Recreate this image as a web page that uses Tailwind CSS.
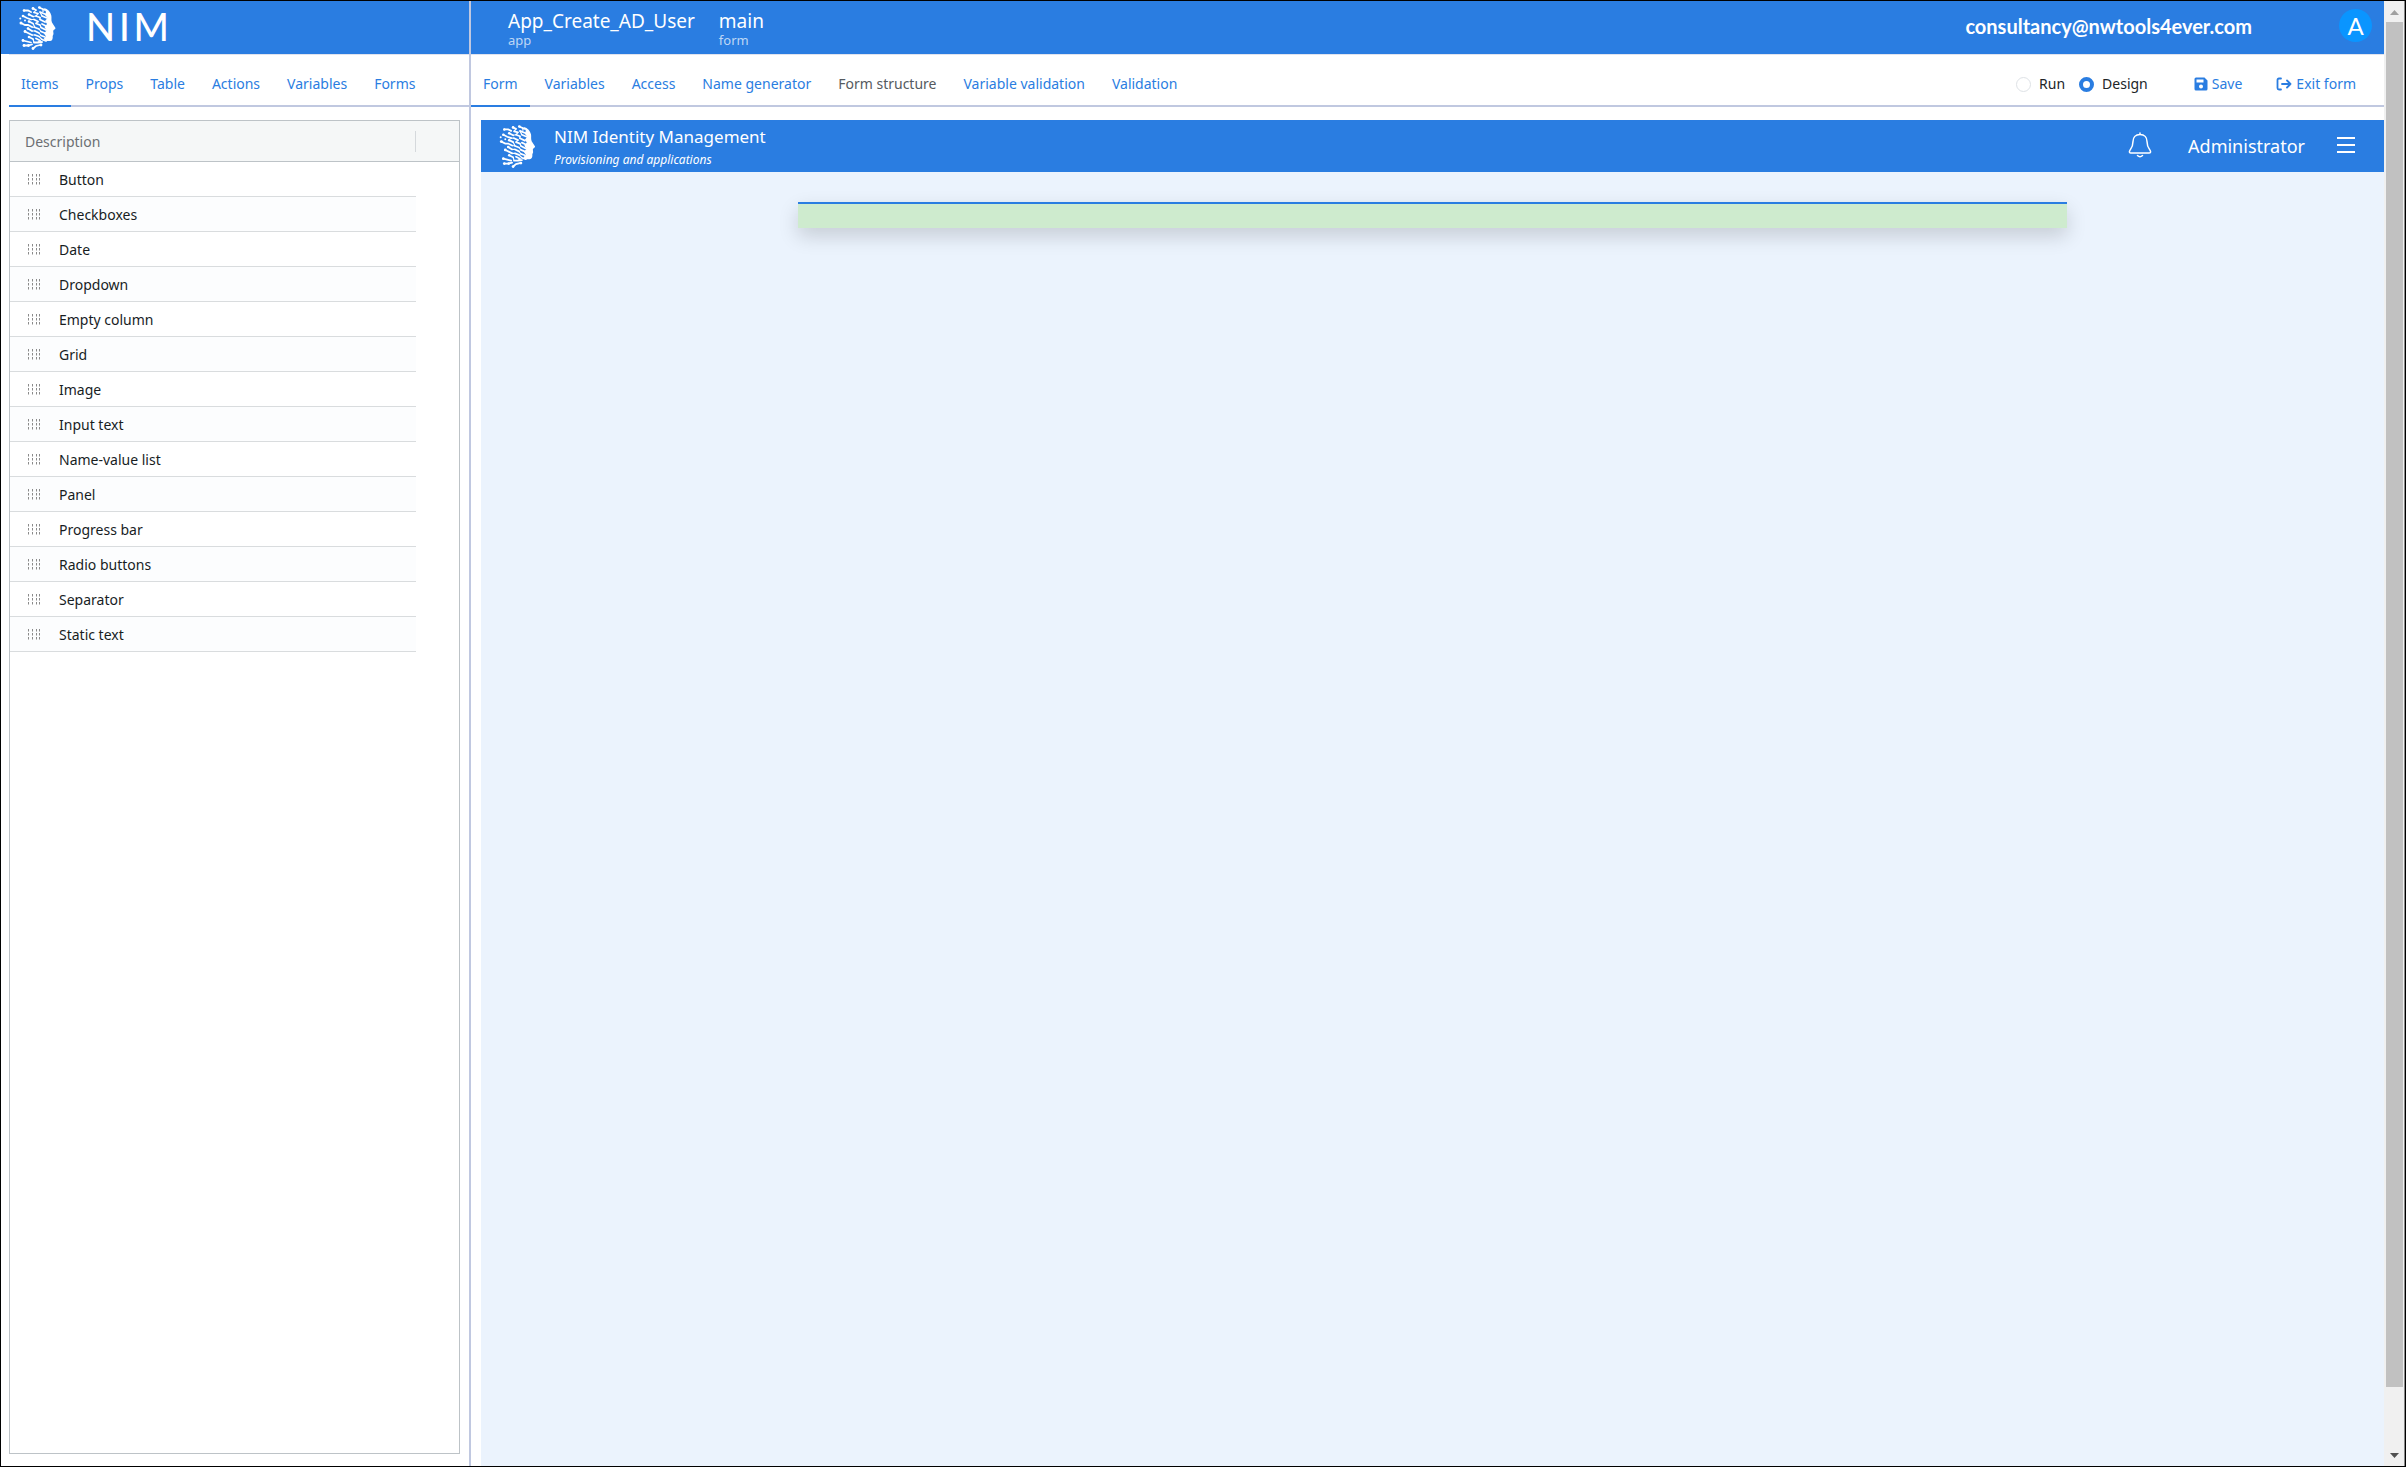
<!DOCTYPE html>
<html lang="en">
<head>
  <meta charset="UTF-8" />
  <meta name="viewport" content="width=device-width, initial-scale=1.0" />
  <title>NIM - App_Create_AD_User</title>
  <script src="https://cdn.jsdelivr.net/npm/@tailwindcss/browser@4"></script>
</head>
<body class="h-screen overflow-hidden bg-black p-px font-['Noto_Sans',sans-serif] text-sm text-[#212529]">
  <!-- shared icons -->
  <svg class="hidden">
    <symbol id="face" viewBox="0 0 37 44">
      <path fill="currentColor" d="M25 2C29 3 31.500 6 32.300 9.500C32.800 12 32 14 33 16.500L36.500 22C36.500 23.500 34.500 23.500 34.200 25L34.500 28L33.700 30C34 33 33 35 31 35H27L24.500 33L27 30.500L25 27.500L27.500 24.500L25.500 21L28 18L26 15L28.500 12L26 9L27 6Z"/>
      <g stroke="currentColor" stroke-width="1.800" stroke-linecap="round" fill="none">
        <path d="M14 2.500L17 4M20 1.500L26 4M5 4.500H9L12 6M15 6.500L19 7.500M21 6L27 8.500"/>
        <path d="M10 8.500L14 10.500M17 10L21 11.500M23 10L28 12M4 10L8 12L12 13.500M15 13.500L19 15.500M21 13.500L26 16"/>
        <path d="M10 15.500L14 17.500M17 17.500L21 19M23 18L27 20M2 17L6 19H9L13 21M16 21.500L20 23M22 21.500L27 24"/>
        <path d="M9 22.500L13 25M16 25L20 27M22 25.500L27 27.500M6 25.500L10 27.500L13 29M16 29L20 30.500M22 29.500L26 31"/>
        <path d="M10 31L14 33M17 32.500L21 34.500M23 33.500L27 35M4 34.500L8 35.500L12 36.500M15 36.500H19L23 36"/>
        <path d="M5 39.500H9L13 38.500M14 42.500L17 40L21 39"/>
      </g>
      <g stroke="currentColor" stroke-width="1.200" fill="none">
        <path d="M17 4L15 6.500M19 7.500L17 10M24 3V6M21 6L23 10M12 13.500L15 13.500M21 11.500V13.500M14 10.500L17 10M19 15.500L17 17.500M14 17.500L16 21.500M21 19L22 21.500M13 21L16 21.500M20 23L22 25.500M13 25L16 25M20 27L22 29.500M13 29L16 29M20 30.500L23 33.500M14 33L15 36.500M21 34.500L19 36.500"/>
      </g>
      <g fill="currentColor">
        <circle cx="14" cy="2.500" r="1.400"/><circle cx="20.500" cy="1.500" r="1.300"/><circle cx="5" cy="4.500" r="1.300"/><circle cx="10" cy="8.500" r="1.300"/>
        <circle cx="4" cy="10" r="1.300"/><circle cx="1.300" cy="12.500" r="1"/><circle cx="6" cy="14.500" r="1"/><circle cx="10" cy="15.500" r="1.300"/>
        <circle cx="2" cy="17" r="1.500"/><circle cx="9" cy="22.500" r="1.300"/><circle cx="6" cy="25.500" r="1.400"/><circle cx="10" cy="31" r="1.300"/>
        <circle cx="4" cy="34.500" r="1.400"/><circle cx="5" cy="39.500" r="1.400"/><circle cx="9.500" cy="39.500" r="1.400"/><circle cx="14" cy="42.500" r="1.400"/><circle cx="22" cy="39" r="1.400"/>
      </g>
    </symbol>
    <symbol id="grip" viewBox="0 0 14 11">
      <path stroke="#8a8a8a" stroke-width="1" fill="none" stroke-dasharray="2.500 1.500" d="M1.500 0V11M5.500 0V11M9.500 0V11M12.500 0V11"/>
    </symbol>
  </svg>

  <div class="flex h-full bg-white">
    <!-- left panel -->
    <aside class="flex w-[470px] shrink-0 flex-col border-r-2 border-[#c0c8e0]">
      <header class="flex h-[53px] shrink-0 items-center bg-[#2a7de1] pl-[18px] text-white">
        <svg class="h-11 w-[37px]"><use href="#face"/></svg>
        <span class="ml-[30px] pb-[3px] font-['Lato',sans-serif] text-[38px] leading-none font-medium tracking-widest">NIM</span>
      </header>
      <nav class="ml-2 flex h-[53px] shrink-0 gap-[3px] border-t border-[#dfe3ee] shadow-[inset_0_-2px_0_#c0c8e0]">
        <a href="#" class="flex items-center border-b-2 border-[#2a7de1] px-3 pt-2 text-[#2a7de1]">Items</a>
        <a href="#" class="flex items-center px-3 pt-[6px] text-[#2a7de1]">Props</a>
        <a href="#" class="flex items-center px-3 pt-[6px] text-[#2a7de1]">Table</a>
        <a href="#" class="flex items-center px-3 pt-[6px] text-[#2a7de1]">Actions</a>
        <a href="#" class="flex items-center px-3 pt-[6px] text-[#2a7de1]">Variables</a>
        <a href="#" class="flex items-center px-3 pt-[6px] text-[#2a7de1]">Forms</a>
      </nav>
      <div class="mt-[13px] mr-[9px] mb-3 ml-2 flex-1 border border-[#bdc3c7]">
        <div class="flex h-[41px] items-center border-b border-[#bdc3c7] bg-[#f5f7f7] pr-[43px]">
          <span id="colDescription" class="flex-1 pt-px pl-[15px] text-[#6c6f73]">Description</span>
          <span class="h-[21px] w-px bg-[#d5d9dc]"></span>
        </div>
        <div class="pr-[43px]">
          <table class="w-full border-separate border-spacing-0" aria-labelledby="colDescription">
            <tbody id="items"></tbody>
          </table>
        </div>
      </div>
    </aside>

    <!-- designer -->
    <main class="flex min-w-0 flex-1 flex-col">
      <header class="flex h-[53px] shrink-0 items-center bg-[#2a7de1] pr-3 pl-[37px] text-white">
        <div class="mr-6">
          <div class="text-[19px] leading-6">App_Create_AD_User</div>
          <div class="text-[13px] leading-[14px] text-white/70">app</div>
        </div>
        <div>
          <div class="text-[19px] leading-6">main</div>
          <div class="text-[13px] leading-[14px] text-white/70">form</div>
        </div>
        <span class="ml-auto pb-1 font-['Lato',sans-serif] text-xl font-bold">consultancy@nwtools4ever.com</span>
        <span class="mb-1 ml-[87px] flex size-[33px] items-center justify-center rounded-full bg-[#0a95ff] font-['Lato',sans-serif] text-2xl">A</span>
      </header>

      <div class="flex h-[53px] shrink-0 items-stretch border-t border-[#dfe3ee] shadow-[inset_0_-2px_0_#c0c8e0]">
        <nav class="flex gap-[3px]">
          <a href="#" class="flex items-center border-b-2 border-[#2a7de1] px-3 pt-2 text-[#2a7de1]">Form</a>
          <a href="#" class="flex items-center px-3 pt-[6px] text-[#2a7de1]">Variables</a>
          <a href="#" class="flex items-center px-3 pt-[6px] text-[#2a7de1]">Access</a>
          <a href="#" class="flex items-center px-3 pt-[6px] text-[#2a7de1]">Name generator</a>
          <a href="#" class="flex items-center px-3 pt-[6px] text-[#555a60]">Form structure</a>
          <a href="#" class="flex items-center px-3 pt-[6px] text-[#2a7de1]">Variable validation</a>
          <a href="#" class="flex items-center px-3 pt-[6px] text-[#2a7de1]">Validation</a>
        </nav>
        <div class="ml-auto flex items-center pt-[6px] pr-7">
          <label class="flex items-center gap-2">
            <input type="radio" name="mode" class="size-[15px] appearance-none rounded-full border border-[#dee2e6] checked:border-4 checked:border-[#2a7de1]" /> Run
          </label>
          <label class="ml-[14px] flex items-center gap-2">
            <input type="radio" name="mode" checked class="size-[15px] appearance-none rounded-full border border-[#dee2e6] checked:border-4 checked:border-[#2a7de1]" /> Design
          </label>
          <button class="ml-[46px] flex items-center gap-1 text-[#2a7de1]">
            <svg class="size-[14px]" viewBox="0 0 14 14"><path fill="currentColor" fill-rule="evenodd" d="M2 0.500H10.500L13.500 3.500V12Q13.500 13.500 12 13.500H2Q0.500 13.500 0.500 12V2Q0.500 0.500 2 0.500ZM2.500 2.500V5.500H9.500V2.500ZM7 7.500A2 2 0 1 0 7 11.500A2 2 0 1 0 7 7.500Z"/></svg>
            Save
          </button>
          <button class="ml-[34px] flex items-center gap-1 text-[#2a7de1]">
            <svg class="h-[14px] w-4" viewBox="0 0 16 14" fill="none" stroke="currentColor" stroke-width="1.800" stroke-linecap="round" stroke-linejoin="round"><path d="M5 1.500H3Q1.500 1.500 1.500 3V11Q1.500 12.500 3 12.500H5M6 7H14.500M11 3.500L14.500 7L11 10.500"/></svg>
            Exit form
          </button>
        </div>
      </div>

      <div class="mt-[13px] ml-[10px] flex flex-1 flex-col bg-[#ebf3fd]">
        <div class="flex h-[52px] shrink-0 items-center bg-[#2a7de1] pl-[18px] text-white">
          <svg class="h-[43px] w-[37px]"><use href="#face"/></svg>
          <div class="ml-[18px] pt-[3px]">
            <div class="text-[17px] leading-6">NIM Identity Management</div>
            <div class="text-xs leading-[22px] italic">Provisioning and applications</div>
          </div>
          <button class="ml-auto pb-[2px]" aria-label="Notifications">
            <svg class="h-[26px] w-6" viewBox="0 0 24 26" fill="none" stroke="currentColor" stroke-width="1.500" stroke-linecap="round" stroke-linejoin="round"><path d="M12 1V2.500M12 2.500C7.500 2.500 5 5.500 5 9.500C5 14.500 3.500 16 1.800 18.500C1 20 1.500 21 3 21H21C22.500 21 23 20 22.200 18.500C20.500 16 19 14.500 19 9.500C19 5.500 16.500 2.500 12 2.500M9.500 23.500Q12 26 14.500 23.500"/></svg>
          </button>
          <span class="ml-[36px] text-lg">Administrator</span>
          <button class="mr-[29px] ml-8 pb-[3px]" aria-label="Menu">
            <svg class="h-4 w-[18px]" viewBox="0 0 18 16" stroke="currentColor" stroke-width="2"><path d="M0 1H18M0 8H18M0 15H18"/></svg>
          </button>
        </div>
        <div class="mx-auto mt-[30px] h-[26px] w-2/3 border-t-2 border-[#2a7de1] bg-[#ceebce] shadow-[0_8px_20px_rgba(0,0,0,0.16)]"></div>
      </div>
    </main>

    <!-- page scrollbar -->
    <div class="flex w-[21px] shrink-0 flex-col items-center border-r border-[#888888] bg-[#f0f0f0] pl-px">
      <svg class="h-[21px] w-[9px] shrink-0" viewBox="0 0 9 21"><path fill="#a0a0a0" d="M0 14L4.500 9L9 14Z"/></svg>
      <div class="w-[17px] flex-1 bg-[#c1c1c1]"></div>
      <svg class="h-[79px] w-[9px] shrink-0" viewBox="0 0 9 79"><path fill="#505050" d="M0 66L4.500 71L9 66Z"/></svg>
    </div>
  </div>

  <script>
    const items = [
      "Button", "Checkboxes", "Date", "Dropdown", "Empty column", "Grid", "Image",
      "Input text", "Name-value list", "Panel", "Progress bar", "Radio buttons",
      "Separator", "Static text"
    ];

    document.getElementById('items').innerHTML = items.map(item => `
      <tr class="h-[35px] even:bg-[#fcfdfe]">
        <td class="w-[49px] border-b border-[#d9dcde] pl-[17px]"><svg class="h-[11px] w-[14px]"><use href="#grip"/></svg></td>
        <td class="border-b border-[#d9dcde] pt-px text-[#181d1f]">${item}</td>
      </tr>`).join('');
  </script>
</body>
</html>
